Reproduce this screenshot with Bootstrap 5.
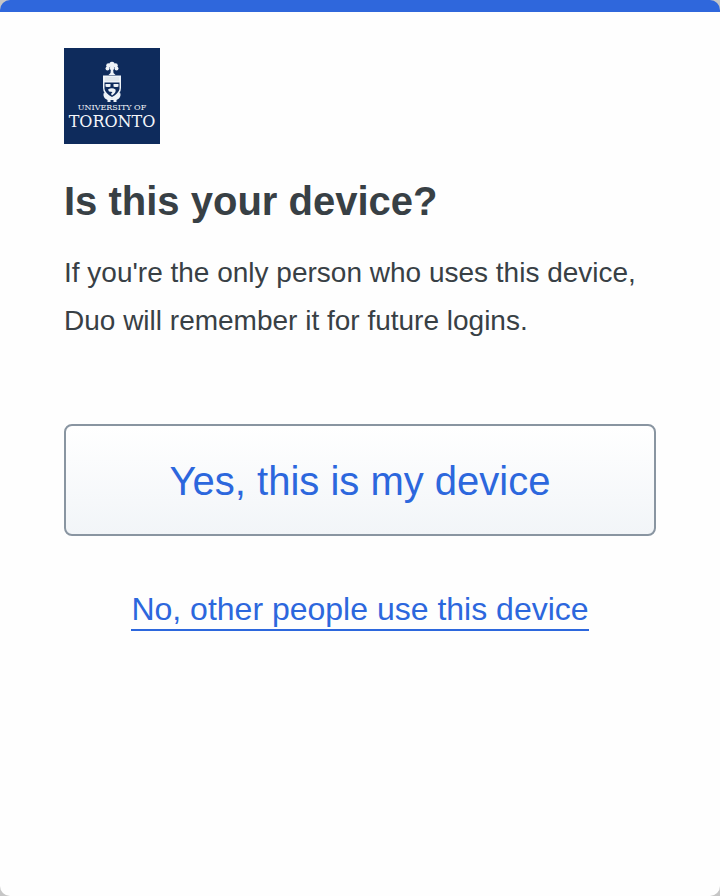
<!DOCTYPE html>
<html lang="en">
<head>
<meta charset="utf-8">
<meta name="viewport" content="width=device-width, initial-scale=1">
<title>Is this your device?</title>
<link href="https://cdn.jsdelivr.net/npm/bootstrap@5.3.0/dist/css/bootstrap.min.css" rel="stylesheet">
<style>
  body { background: #c6c6c6; font-family: "Liberation Sans", Arial, sans-serif; color: #384045; }
  .prompt { border-top: 12px solid #2f67dc; border-radius: 10px; background: #fefefe; padding: 36px 64px; }
  .school-logo { width: 96px; height: 96px; }
  .prompt-title { font-size: 40px; line-height: 48px; margin: 33px 0 24px; }
  .prompt-text { font-size: 28px; line-height: 48px; margin-bottom: 79px; }
  .btn-trust { font-size: 40px; line-height: 60px; padding: 25px 24px 23px; border: 2px solid #8995a1; border-radius: 8px; color: #2c67dd; background: linear-gradient(#fff, #f2f5f8); }
  .btn-trust:hover { color: #1d52bd; border-color: #2c67dd; }
  .other-link { font-size: 32px; line-height: 40px; margin-top: 53px; color: #2c67dd; border-bottom: 2px solid; }
</style>
<script src="https://cdn.jsdelivr.net/npm/bootstrap@5.3.0/dist/js/bootstrap.bundle.min.js" defer></script>
</head>
<body>
<main class="prompt min-vh-100 d-flex flex-column">
  <svg class="school-logo" viewBox="0 0 96 96" role="img" aria-label="University of Toronto">
    <rect width="96" height="96" fill="#0e2b5c"/>
    <g fill="#eef3f8">
      <circle cx="48" cy="16.500" r="2.700"/><circle cx="44.500" cy="17.500" r="2.300"/><circle cx="51.500" cy="17.500" r="2.300"/>
      <circle cx="43.500" cy="20.500" r="2"/><circle cx="52.500" cy="20.500" r="2"/><circle cx="48" cy="20" r="2.200"/>
      <path d="M47 20h2l.5 5 2 2h-7l2-2z"/>
      <path d="M39 27.500h18V40q0 7-9 11-9-4-9-11z"/>
      <path d="M40 44.500l3.500 3 4.500 3 4.500-3 3.500-3q1.500 3-1 6l-2.500 1.500v2h-9v-2L41 50.500q-2.500-3-1-6z"/>
    </g>
    <g fill="#0e2b5c">
      <path d="M40.500 34.500h15V41q-1 4.500-7.500 8-6.500-3.500-7.500-8z"/>
      <path d="M46.500 52h3v2h-3z"/>
    </g>
    <g fill="#eef3f8">
      <path d="M41.500 36h5v2.500q-2.500 1-5 0zM49.500 36h5v2.500q-2.500 1-5 0z"/>
      <path d="M44 41.500q4-2.500 7.500 0 1 3-3.500 6l-1-1.500 1.500-2-3.500-.5z"/>
    </g>
    <path d="M41 30h14M41 32h14" stroke="#b8c4d3" stroke-width=".5"/>
    <g fill="#f4f6fa" font-family="'DejaVu Serif', serif" text-anchor="middle">
      <text x="48" y="62" font-size="8">UNIVERSITY OF</text>
      <text x="48" y="79" font-size="16">TORONTO</text>
    </g>
  </svg>
  <h1 class="prompt-title fw-bold">Is this your device?</h1>
  <p class="prompt-text">If you're the only person who uses this device, Duo will remember it for future logins.</p>
  <button type="button" class="btn btn-trust w-100">Yes, this is my device</button>
  <a href="#" class="other-link align-self-center text-decoration-none">No, other people use this device</a>
</main>
</body>
</html>
